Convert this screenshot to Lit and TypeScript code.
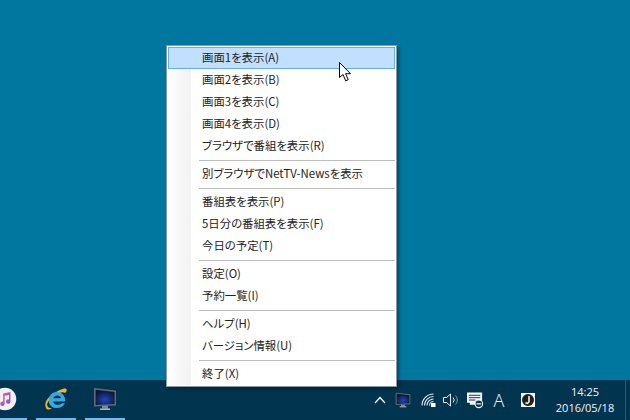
import { LitElement, html, css, svg } from "lit";
import { customElement } from "lit/decorators.js";

type Entry = { label: string; active?: boolean } | null;
const ENTRIES: Entry[] = [
  { label: "画面1を表示(A)", active: true },
  { label: "画面2を表示(B)" },
  { label: "画面3を表示(C)" },
  { label: "画面4を表示(D)" },
  { label: "ブラウザで番組を表示(R)" },
  null,
  { label: "別ブラウザでNetTV-Newsを表示" },
  null,
  { label: "番組表を表示(P)" },
  { label: "5日分の番組表を表示(F)" },
  { label: "今日の予定(T)" },
  null,
  { label: "設定(O)" },
  { label: "予約一覧(I)" },
  null,
  { label: "ヘルプ(H)" },
  { label: "バージョン情報(U)" },
  null,
  { label: "終了(X)" },
];

const monitor = (w: number, h: number, id: string) => html`<svg width=${w} height=${h} viewBox="0 0 24 24">
  <defs>
    <radialGradient id=${id} cx="0.5" cy="0.65" r="0.6">
      <stop offset="0" stop-color="#1f46c8" />
      <stop offset="1" stop-color="#0b1630" />
    </radialGradient>
  </defs>
  <path d="M1 1 L23 3.5 V18.5 L1 19.5 Z" fill="#5f6c74" />
  <path d="M2.6 2.8 L21.6 5 V17 L2.6 18 Z" fill="url(#${id})" />
  <rect x="9" y="19" width="6" height="2.6" fill="#7e888e" />
  <rect x="7" y="21.4" width="10" height="1.6" fill="#aab1b5" />
</svg>`;

@customElement("app-root")
export class AppRoot extends LitElement {
  static styles = css`
    :host {
      display: block;
      width: 630px;
      height: 420px;
      font-family: "Noto Sans CJK JP", "Noto Sans", sans-serif;
    }
    .screen {
      width: 630px;
      height: 420px;
      display: flex;
      flex-direction: column;
      position: relative;
      overflow: hidden;
      background: #01779f;
    }
    .desktop {
      flex: 1;
    }
    .taskbar {
      height: 40px;
      background: #01344f;
      display: flex;
      align-items: stretch;
      color: #fff;
    }
    .apps {
      display: flex;
      flex: 1;
      gap: 9px;
    }
    .app {
      width: 40px;
      display: flex;
      align-items: center;
      justify-content: center;
      border-bottom: 2px solid #76b9ed;
      box-sizing: border-box;
      flex: none;
    }
    .app.cut {
      width: 27px;
      justify-content: flex-start;
      overflow: hidden;
    }
    .app.cut svg {
      margin-left: -7px;
      flex: none;
    }
    .tray {
      display: flex;
      align-items: center;
      height: 40px;
    }
    .tray svg {
      display: block;
      flex: none;
    }
    .chev { margin-right: 9px; }
    .mon { margin-right: 10px; }
    .wifi { margin-right: 7px; }
    .spk { margin-right: 7px; }
    .note { margin-right: 9px; }
    .ime {
      width: 12px;
      margin-right: 16px;
      font: 300 18px/1 "Open Sans", sans-serif;
      text-align: center;
    }
    .j { margin-right: 20px; }
    .clock {
      width: 60px;
      font: 11px/16px "Open Sans", sans-serif;
      text-align: center;
      color: #f2f6f8;
      margin-right: 10px;
      padding-bottom: 1px;
    }
    .divider {
      width: 1px;
      height: 40px;
      background: #2b5a72;
      margin-right: 4px;
    }
    .menu {
      position: absolute;
      left: 166px;
      top: 45px;
      width: 231px;
      height: 342px;
      box-sizing: border-box;
      border: 1px solid #8c9aa3;
      padding: 1px;
      background: #fff;
      box-shadow: 2px 2px 3px rgba(0, 20, 30, 0.45);
      font-size: 11.4px;
      font-feature-settings: "palt";
      color: #222;
    }
    .gutter {
      position: absolute;
      left: 1px;
      top: 1px;
      bottom: 1px;
      width: 23px;
      background: linear-gradient(to right, #fff, #f1f1f1);
    }
    .item {
      position: relative;
      height: 22px;
      box-sizing: border-box;
      padding-left: 33px;
      padding-bottom: 2px;
      white-space: nowrap;
      border: 1px solid transparent;
      display: flex;
      align-items: center;
    }
    .item.active {
      background: #c1dffe;
      border-color: #62aef0;
    }
    .sep {
      position: relative;
      height: 6px;
      display: flex;
      align-items: center;
      padding-left: 31px;
    }
    .sep::after {
      content: "";
      flex: 1;
      height: 1px;
      background: #bdbdbd;
    }
    .cursor {
      position: absolute;
      left: 339px;
      top: 62px;
    }
  `;

  render() {
    return html`<div class="screen">
      <div class="desktop"></div>
      <div class="taskbar">
        <div class="apps">
          <div class="app cut">
            <svg width="24" height="24" viewBox="0 0 33 33">
              <defs>
                <linearGradient id="tune" x1="0" y1="0" x2="1" y2="1">
                  <stop offset="0" stop-color="#f35a8c" />
                  <stop offset="1" stop-color="#6a5ce0" />
                </linearGradient>
              </defs>
              <circle cx="16.5" cy="16.5" r="15.5" fill="#f4eff2" />
              <path d="M14 9 L24 7 V20 a3 3 0 1 1 -2 -2.8 V11 L16 12.2 V23 a3 3 0 1 1 -2 -2.8 Z" fill="url(#tune)" />
            </svg>
          </div>
          <div class="app">
            <svg width="24" height="24" viewBox="0 0 24 24">
              <path d="M2 21 C-1 15 6 6 20 1.5 C24 1 23 4.5 21 6 C19 3.5 9 7 4 15 C2 18 3 21 8 21.5 C5 23 3 23 2 21 Z" fill="#e8b92c" />
              <path d="M12.5 5 C18 5 21.5 9 21.3 14.6 H9.3 C9.6 18 14.5 19 18 16.2 H21 C18 23 6 23 4.8 14.5 C4.3 9 8 5 12.5 5 Z M9.4 11.3 H17 C16.8 7.6 10 7.6 9.4 11.3 Z" fill="#35a9e0" fill-rule="evenodd" />
            </svg>
          </div>
          <div class="app">${monitor(24, 24, "mon-a")}</div>
        </div>
        <div class="tray">
          <svg class="chev" width="12" height="8" viewBox="0 0 12 8">
            <path d="M1 7 L6 1.5 L11 7" fill="none" stroke="#fff" stroke-width="1.2" />
          </svg>
          <span class="mon">${monitor(16, 16, "mon-b")}</span>
          <svg class="wifi" width="15" height="14" viewBox="0 0 15 14">
            <g fill="none" stroke="#e6edf0" stroke-width="1.1">
              <path d="M1 12.5 A11.5 11.5 0 0 1 12.5 1" />
              <path d="M3.5 12.5 A9 9 0 0 1 12.5 3.5" />
              <path d="M6 12.5 A6.5 6.5 0 0 1 12.5 6" />
              <path d="M8.5 12.5 A4 4 0 0 1 12.5 8.5" />
            </g>
            <rect x="10" y="10" width="4.5" height="4" fill="#fff" />
          </svg>
          <svg class="spk" width="17" height="14" viewBox="0 0 17 14">
            <path d="M0.5 4.5 H3.5 L7.5 1 V13 L3.5 9.5 H0.5 Z" fill="none" stroke="#e6edf0" stroke-width="1" />
            <path d="M10 4.5 A3.5 3.5 0 0 1 10 9.5" fill="none" stroke="#e6edf0" />
            <path d="M12.5 2.5 A6.5 6.5 0 0 1 12.5 11.5" fill="none" stroke="#7f9aa8" />
          </svg>
          <svg class="note" width="17" height="17" viewBox="0 0 18 17">
            <path d="M0 0 H16 V11 H9 V13 H6 L3 13 V11 H0 Z" fill="#f4f6f7" />
            <path d="M2 3 H14 M2 5.5 H14 M2 8 H9" stroke="#01344f" stroke-width="1" />
            <circle cx="12.5" cy="12" r="4" fill="#01344f" stroke="#f4f6f7" stroke-width="1.2" />
            <rect x="10" y="11.4" width="5" height="1.3" fill="#f4f6f7" />
          </svg>
          <span class="ime">A</span>
          <svg class="j" width="14" height="14" viewBox="0 0 14 14">
            <rect width="14" height="14" fill="#f6f6f6" />
            <circle cx="7" cy="7" r="6" fill="#1e1e1e" />
            <path d="M8 3 V8.5 A2 2 0 0 1 4.5 9.5" fill="none" stroke="#f2f2f2" stroke-width="1.6" />
          </svg>
          <div class="clock">14:25<br />2016/05/18</div>
          <div class="divider"></div>
        </div>
      </div>

      <div class="menu">
        <div class="gutter"></div>
        ${ENTRIES.map((e) =>
          e
            ? html`<div class="item ${e.active ? "active" : ""}">${e.label}</div>`
            : html`<div class="sep"></div>`
        )}
      </div>

      <svg class="cursor" width="13" height="20" viewBox="0 0 13 20">
        ${svg`<path d="M0.5 0.5 V15.5 L4 12.5 L6.7 18.8 L9.2 17.7 L6.6 11.7 H11.5 Z" fill="#fff" stroke="#000" stroke-width="1" stroke-linejoin="miter" />`}
      </svg>
    </div>`;
  }
}
